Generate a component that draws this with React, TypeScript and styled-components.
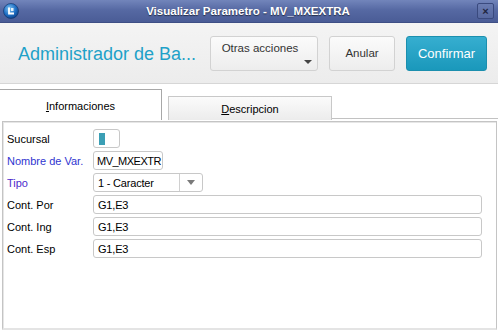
import React from "react";
import styled, { createGlobalStyle } from "styled-components";

const GlobalStyle = createGlobalStyle`
  html, body { margin: 0; padding: 0; background: #ffffff; }
  body { font-family: "Liberation Sans", Arial, sans-serif; }
  * { box-sizing: border-box; }
`;

const Window = styled.div`
  width: 498px;
  height: 330px;
  display: flex;
  flex-direction: column;
  background: #ffffff;
  overflow: hidden;
`;

const TitleBar = styled.div`
  height: 23px;
  flex: none;
  display: flex;
  align-items: center;
  padding: 0 4px 0 3px;
  background: linear-gradient(#7285bb, #5669a3 45%, #4a5c96);
  border-bottom: 1px solid #3e4f85;
`;

const TitleText = styled.div`
  flex: 1;
  text-align: center;
  color: #ffffff;
  font-size: 11.5px;
  font-weight: bold;
  text-shadow: 0 1px 1px rgba(0, 0, 0, 0.55);
`;

const CloseButton = styled.div`
  width: 17px;
  height: 16px;
  border: 1px solid #3a4a7e;
  border-radius: 2px;
  background: linear-gradient(#6a7cb2, #5668a0);
  display: flex;
  align-items: center;
  justify-content: center;
  color: #1e2540;
  font-size: 11px;
  font-weight: bold;
  line-height: 1;
`;

const Header = styled.div`
  height: 61px;
  flex: none;
  display: flex;
  align-items: center;
  padding: 0 11px 0 18px;
  background: linear-gradient(#f4f4f4, #ececec);
  border-bottom: 1px solid #d6d6d6;
`;

const AppTitle = styled.div`
  flex: 1;
  min-width: 0;
  white-space: nowrap;
  color: #1ea1c8;
  font-size: 18px;
  margin-top: 2px;
`;

const Button = styled.div<{ $primary?: boolean; $w: number }>`
  position: relative;
  flex: none;
  width: ${(p) => p.$w}px;
  height: 35px;
  margin-left: 11px;
  border-radius: 3px;
  display: flex;
  align-items: center;
  justify-content: center;
  font-size: ${(p) => (p.$primary ? 13 : 11.5)}px;
  border: 1px solid ${(p) => (p.$primary ? "#1b8fae" : "#d2d2d2")};
  color: ${(p) => (p.$primary ? "#ffffff" : "#333333")};
  background: ${(p) =>
    p.$primary
      ? "linear-gradient(#36aed0, #1a98bb)"
      : "linear-gradient(#fbfbfb, #ededed)"};
`;

const MenuLabel = styled.span`
  margin-top: -10px;
  margin-left: -8px;
`;

const MenuCaret = styled.span`
  position: absolute;
  right: 5px;
  bottom: 6px;
  width: 0;
  height: 0;
  border-left: 4px solid transparent;
  border-right: 4px solid transparent;
  border-top: 4px solid #444;
`;

const Body = styled.div`
  flex: 1;
  display: flex;
  flex-direction: column;
  padding-top: 5px;
`;

const TabStrip = styled.div`
  height: 31px;
  flex: none;
  display: flex;
  align-items: flex-end;
`;

const Tab = styled.div<{ $active?: boolean; $w: number }>`
  width: ${(p) => p.$w}px;
  height: ${(p) => (p.$active ? 31 : 24)}px;
  display: flex;
  align-items: center;
  justify-content: center;
  font-size: 11px;
  color: #000;
  background: ${(p) => (p.$active ? "#ffffff" : "linear-gradient(#fbfbfb, #ececec)")};
  border: 1px solid ${(p) => (p.$active ? "#a8a8a8" : "#c8c8c8")};
  border-left: ${(p) => (p.$active ? "none" : "1px solid #c8c8c8")};
  border-bottom: none;
  margin-right: ${(p) => (p.$active ? 6 : 0)}px;
  padding-top: ${(p) => (p.$active ? 2 : 0)}px;
`;

const TabFill = styled.div`
  flex: 1;
  height: 1px;
  background: #c2c2c2;
  margin-bottom: 1px;
`;

const Mnemonic = styled.span`
  text-decoration: underline;
`;

const Panel = styled.div`
  flex: 1;
  margin: 1px 1px 0 2px;
  border: 1px solid #c4c4c4;
  border-bottom: 2px solid #e4e4e4;
  box-shadow: inset 1px 1px 0 #e6e6e6;
  padding: 7px 0 0 4px;
  display: grid;
  grid-template-columns: 86px 1fr;
  grid-auto-rows: 19px;
  row-gap: 3px;
  align-content: start;
`;

const Label = styled.div<{ $color?: string }>`
  font-size: 11px;
  color: ${(p) => p.$color || "#000000"};
  display: flex;
  align-items: center;
  padding-top: 1px;
`;

const Input = styled.div<{ $w: number }>`
  width: ${(p) => p.$w}px;
  height: 19px;
  border: 1px solid #c8c8c8;
  border-radius: 3px;
  background: #ffffff;
  font-size: 11px;
  letter-spacing: -0.2px;
  color: #000;
  display: flex;
  align-items: center;
  padding-left: 4px;
  overflow: hidden;
  white-space: nowrap;
`;

const TightInput = styled(Input)`
  padding-left: 3px;
  letter-spacing: -0.5px;
`;

const CheckFill = styled.span`
  width: 6px;
  height: 12px;
  background: #3b9fb5;
  margin-left: 1px;
`;

const SelectBox = styled(Input)`
  padding-left: 0;
`;

const SelectText = styled.span`
  flex: 1;
  padding-left: 4px;
`;

const SelectArrow = styled.span`
  width: 23px;
  height: 100%;
  border-left: 1px solid #d0d0d0;
  display: flex;
  align-items: center;
  justify-content: center;
  &::after {
    content: "";
    border-left: 4px solid transparent;
    border-right: 4px solid transparent;
    border-top: 5px solid #7a7a7a;
  }
`;

const AppIcon = () => (
  <svg width="16" height="16" viewBox="0 0 16 16">
    <defs>
      <radialGradient id="ig" cx="0.4" cy="0.35" r="0.7">
        <stop offset="0" stopColor="#7ec3f2" />
        <stop offset="0.6" stopColor="#1f6fc4" />
        <stop offset="1" stopColor="#0d3f86" />
      </radialGradient>
    </defs>
    <circle cx="8" cy="8" r="7.5" fill="url(#ig)" stroke="#0b2f66" strokeWidth="0.6" />
    <path d="M6 4.5 V10.5 H11" fill="none" stroke="#ffffff" strokeWidth="1.8" />
    <rect x="8" y="5" width="2.5" height="3" fill="#ffffff" opacity="0.85" />
  </svg>
);

const fields = [
  { label: "Cont. Por", value: "G1,E3" },
  { label: "Cont. Ing", value: "G1,E3" },
  { label: "Cont. Esp", value: "G1,E3" },
];

export default function App() {
  return (
    <>
      <GlobalStyle />
      <Window>
        <TitleBar>
          <AppIcon />
          <TitleText>Visualizar Parametro - MV_MXEXTRA</TitleText>
          <CloseButton>×</CloseButton>
        </TitleBar>
        <Header>
          <AppTitle>Administrador de Ba...</AppTitle>
          <Button $w={108}>
            <MenuLabel>Otras acciones</MenuLabel>
            <MenuCaret />
          </Button>
          <Button $w={66}>Anular</Button>
          <Button $w={81} $primary>
            Confirmar
          </Button>
        </Header>
        <Body>
          <TabStrip>
            <Tab $active $w={162}>
              <span>
                <Mnemonic>I</Mnemonic>nformaciones
              </span>
            </Tab>
            <Tab $w={164}>
              <span>
                <Mnemonic>D</Mnemonic>escripcion
              </span>
            </Tab>
            <TabFill />
          </TabStrip>
          <Panel>
            <Label>Sucursal</Label>
            <Input $w={27}>
              <CheckFill />
            </Input>
            <Label $color="#2f35d0">Nombre de Var.</Label>
            <TightInput $w={70}>MV_MXEXTR</TightInput>
            <Label $color="#4c2ccc">Tipo</Label>
            <SelectBox $w={110}>
              <SelectText>1 - Caracter</SelectText>
              <SelectArrow />
            </SelectBox>
            {fields.map((f) => (
              <React.Fragment key={f.label}>
                <Label>{f.label}</Label>
                <Input $w={389}>{f.value}</Input>
              </React.Fragment>
            ))}
          </Panel>
        </Body>
      </Window>
    </>
  );
}
